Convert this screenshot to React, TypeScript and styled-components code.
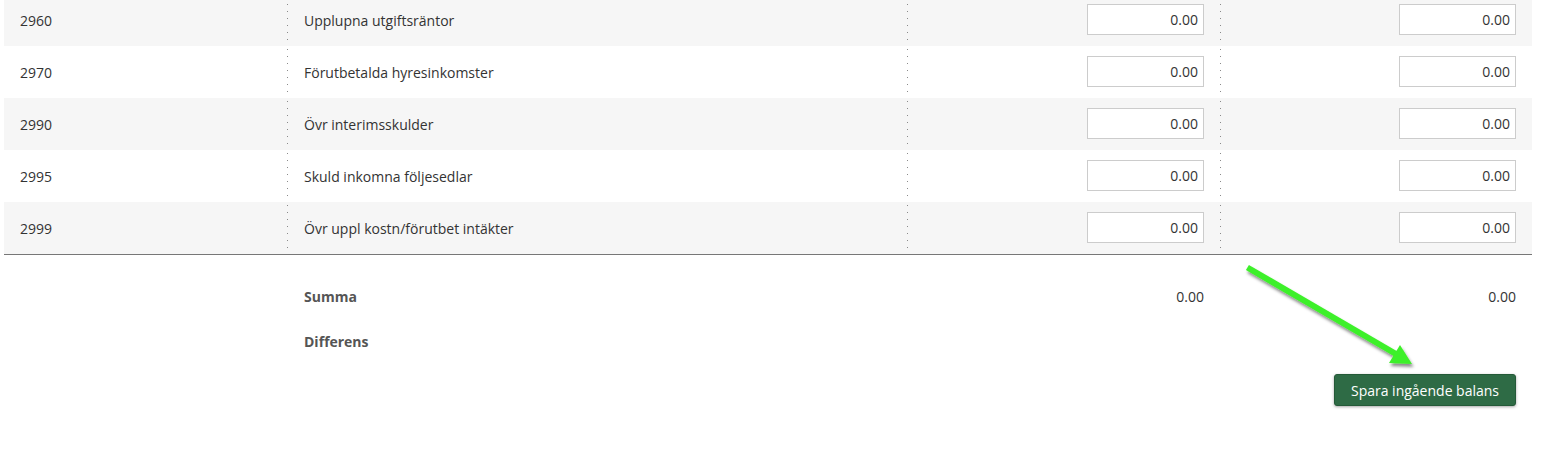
import React from "react";
import styled, { createGlobalStyle } from "styled-components";

const Global = createGlobalStyle`
  html, body { margin: 0; padding: 0; background: #fff; }
  body { font-family: "Open Sans", "Liberation Sans", sans-serif; font-size: 14px; color: #333; }
`;

const Page = styled.div`
  position: relative;
  width: 1545px;
  height: 468px;
  overflow: hidden;
  padding-left: 4px;
  box-sizing: border-box;
`;

const Table = styled.div`
  width: 1528px;
  margin-top: -6px;
  border-bottom: 1px solid #777;
`;

const cols = "283px 620px 313px 312px";

const Row = styled.div<{ $alt: boolean }>`
  display: grid;
  grid-template-columns: ${cols};
  height: 52px;
  background: ${(p) => (p.$alt ? "#f6f6f6" : "#fff")};
`;

const Cell = styled.div<{ $dotted?: boolean; $right?: boolean }>`
  display: flex;
  align-items: center;
  justify-content: ${(p) => (p.$right ? "flex-end" : "flex-start")};
  padding: ${(p) => (p.$right ? "0 16px 0 0" : "0 0 0 16px")};
  box-sizing: border-box;
  ${(p) =>
    p.$dotted
      ? `background-image: repeating-linear-gradient(to bottom, #8a8a8a 0px, #8a8a8a 1px, transparent 1px, transparent 7px);
         background-size: 1px 100%;
         background-repeat: no-repeat;
         background-position: 0 3px;`
      : ""}
  ${(p) => (p.$dotted && !p.$right ? "padding-left: 17px;" : "")}
`;

const AmountInput = styled.input`
  width: 117px;
  height: 31px;
  box-sizing: border-box;
  border: 1px solid #ccc;
  background: #fff;
  text-align: right;
  padding: 0 5px 0 6px;
  font-family: "Open Sans", "Liberation Sans", sans-serif;
  font-size: 14px;
  color: #333;
  outline: none;
  margin-top: -1px;
`;

const Foot = styled.div`
  width: 1528px;
  padding-top: 19px;
`;

const FootRow = styled.div`
  display: grid;
  grid-template-columns: ${cols};
  height: 45px;
`;

const FootCell = styled.div<{ $right?: boolean }>`
  display: flex;
  align-items: center;
  justify-content: ${(p) => (p.$right ? "flex-end" : "flex-start")};
  padding: ${(p) => (p.$right ? "0 16px 0 0" : "0 0 0 17px")};
`;

const Label = styled.span`
  font-weight: 700;
  color: #555;
`;

const Actions = styled.div`
  display: flex;
  justify-content: flex-end;
  padding: 10px 16px 0 0;
`;

const SaveButton = styled.button`
  height: 32px;
  padding: 0;
  width: 182px;
  white-space: nowrap;
  border: 1px solid #245a38;
  border-radius: 3px;
  background: #2e6b45;
  color: #fff;
  font-family: "Open Sans", "Liberation Sans", sans-serif;
  font-size: 14px;
  box-shadow: 0 1px 3px rgba(0, 0, 0, 0.35);
  cursor: pointer;
`;

const ArrowLayer = styled.svg`
  position: absolute;
  left: 0;
  top: 0;
  pointer-events: none;
  overflow: visible;
`;

const rows = [
  { code: "2960", name: "Upplupna utgiftsräntor" },
  { code: "2970", name: "Förutbetalda hyresinkomster" },
  { code: "2990", name: "Övr interimsskulder" },
  { code: "2995", name: "Skuld inkomna följesedlar" },
  { code: "2999", name: "Övr uppl kostn/förutbet intäkter" },
];

export default function App() {
  return (
    <Page>
      <Global />
      <Table>
        {rows.map((r, i) => (
          <Row key={r.code} $alt={i % 2 === 0}>
            <Cell>{r.code}</Cell>
            <Cell $dotted>{r.name}</Cell>
            <Cell $dotted $right>
              <AmountInput defaultValue="0.00" />
            </Cell>
            <Cell $dotted $right>
              <AmountInput defaultValue="0.00" />
            </Cell>
          </Row>
        ))}
      </Table>
      <Foot>
        <FootRow>
          <FootCell />
          <FootCell>
            <Label>Summa</Label>
          </FootCell>
          <FootCell $right>0.00</FootCell>
          <FootCell $right>0.00</FootCell>
        </FootRow>
        <FootRow>
          <FootCell />
          <FootCell>
            <Label>Differens</Label>
          </FootCell>
          <FootCell $right />
          <FootCell $right />
        </FootRow>
        <Actions>
          <SaveButton>Spara ingående balans</SaveButton>
        </Actions>
      </Foot>
      <ArrowLayer width="1545" height="468" viewBox="0 0 1545 468">
        <defs>
          <filter id="sh" x="-20%" y="-20%" width="140%" height="140%">
            <feDropShadow dx="1.5" dy="3" stdDeviation="1.6" floodColor="#000" floodOpacity="0.45" />
          </filter>
        </defs>
        <g filter="url(#sh)">
          <line x1="1250" y1="269" x2="1396" y2="354" stroke="#3ef02a" strokeWidth="6" strokeLinecap="square" />
          <polygon points="1412,364 1400,345 1389,363" fill="#3ef02a" />
        </g>
      </ArrowLayer>
    </Page>
  );
}
